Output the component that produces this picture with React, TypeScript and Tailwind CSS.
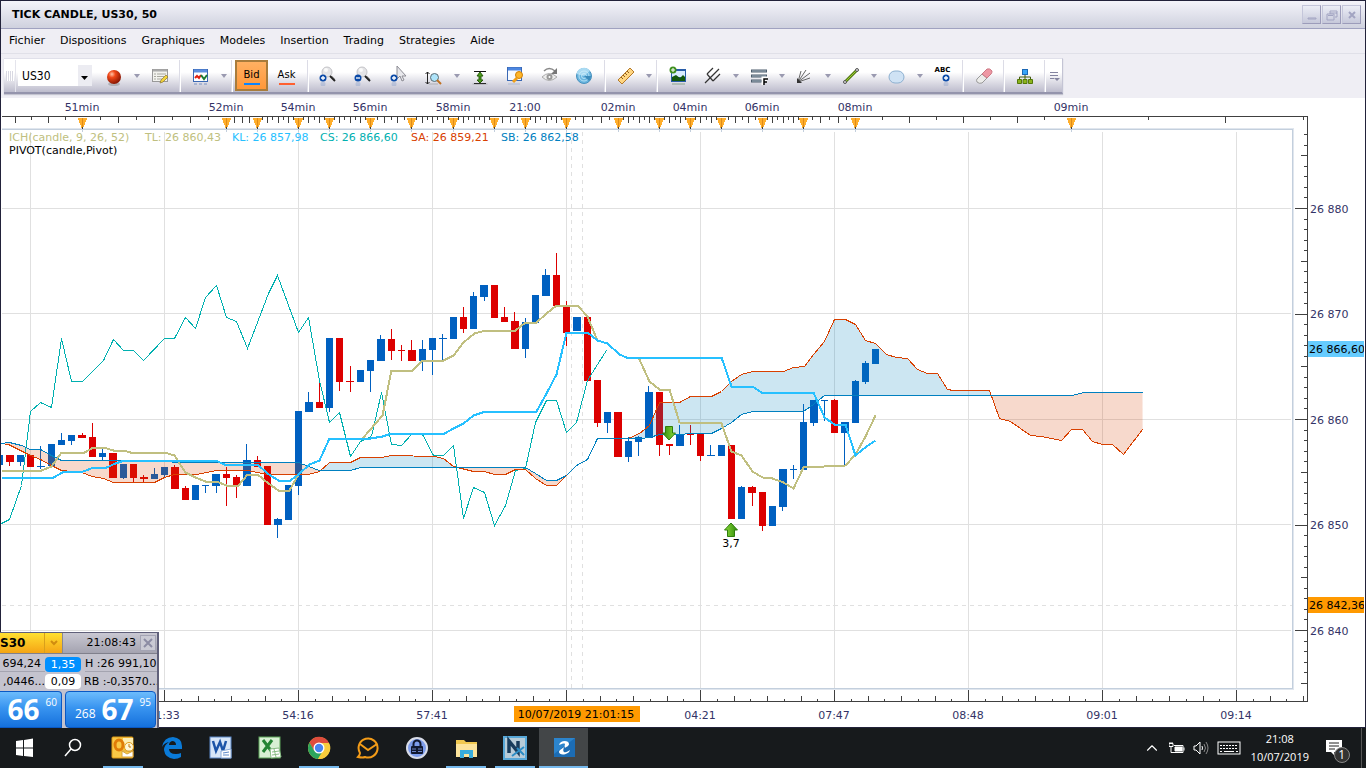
import type { ReactNode } from 'react';
import { ChevronUp } from 'lucide-react';

type Point = [number, number];
/** side, high, body top, body bottom, low */
type Candle = ['up' | 'down', number, number, number, number];

const UP = '#0060c0';
const DOWN = '#dc0000';
const CANDLE_STEP = 134 / 13;

const candles: Candle[] = [
    ['up', 455, 455, 465, 465],
    ['down', 455, 455, 462, 466],
    ['up', 455, 455, 462, 466],
    ['down', 455, 455, 467, 467],
    ['up', 446, 466, 467, 469],
    ['up', 444, 444, 466, 466],
    ['up', 433, 440, 445, 445],
    ['up', 435, 435, 441, 445],
    ['down', 433, 435, 438, 438],
    ['down', 423, 437, 457, 457],
    ['up', 449, 453, 457, 460],
    ['down', 453, 453, 478, 478],
    ['up', 464, 464, 478, 479],
    ['down', 464, 464, 478, 482],
    ['down', 475, 477, 479, 482],
    ['up', 468, 474, 479, 479],
    ['up', 467, 467, 475, 478],
    ['down', 465, 467, 489, 489],
    ['down', 486, 488, 500, 500],
    ['up', 485, 485, 500, 500],
    ['up', 485, 485, 486, 493],
    ['up', 474, 474, 486, 493],
    ['down', 467, 474, 478, 506],
    ['down', 475, 477, 486, 498],
    ['up', 444, 460, 486, 486],
    ['down', 456, 460, 467, 467],
    ['down', 466, 466, 525, 525],
    ['up', 518, 519, 525, 538],
    ['up', 485, 485, 520, 520],
    ['up', 411, 411, 486, 495],
    ['up', 392, 402, 412, 412],
    ['down', 383, 402, 408, 408],
    ['up', 338, 338, 408, 412],
    ['down', 338, 338, 382, 391],
    ['down', 366, 381, 382, 392],
    ['up', 370, 370, 382, 382],
    ['up', 360, 360, 371, 392],
    ['up', 335, 339, 361, 361],
    ['down', 329, 339, 351, 360],
    ['down', 345, 350, 351, 361],
    ['down', 340, 350, 361, 361],
    ['up', 340, 349, 361, 371],
    ['up', 338, 338, 350, 375],
    ['up', 334, 338, 339, 360],
    ['up', 317, 317, 339, 339],
    ['down', 307, 317, 329, 333],
    ['up', 292, 296, 329, 329],
    ['up', 285, 285, 297, 301],
    ['down', 285, 285, 318, 318],
    ['down', 307, 317, 322, 322],
    ['down', 312, 321, 349, 349],
    ['up', 318, 322, 349, 358],
    ['up', 295, 295, 323, 323],
    ['up', 269, 275, 296, 296],
    ['down', 253, 275, 306, 306],
    ['down', 301, 305, 333, 346],
    ['up', 317, 317, 331, 331],
    ['down', 317, 317, 381, 381],
    ['down', 380, 380, 423, 427],
    ['up', 412, 412, 423, 433],
    ['down', 412, 412, 457, 457],
    ['up', 437, 441, 457, 462],
    ['up', 436, 437, 442, 456],
    ['up', 386, 392, 438, 438],
    ['down', 392, 392, 445, 456],
    ['down', 444, 444, 446, 455],
    ['up', 425, 434, 446, 446],
    ['down', 425, 434, 435, 445],
    ['down', 434, 434, 456, 461],
    ['up', 445, 455, 456, 456],
    ['up', 445, 445, 456, 456],
    ['down', 445, 445, 519, 519],
    ['up', 486, 487, 519, 519],
    ['down', 486, 487, 493, 506],
    ['down', 492, 492, 526, 531],
    ['up', 506, 506, 526, 526],
    ['up', 469, 469, 507, 511],
    ['up', 465, 469, 470, 479],
    ['up', 404, 422, 470, 470],
    ['up', 400, 400, 423, 426],
    ['up', 400, 400, 401, 421],
    ['down', 399, 400, 433, 433],
    ['up', 422, 422, 433, 465],
    ['up', 380, 381, 423, 423],
    ['up', 361, 363, 382, 384],
    ['up', 349, 349, 364, 364],
];

// Ichimoku lines
const tenkan: Point[] = [
    [1, 470], [41, 470], [51, 466], [61, 452], [84, 452], [93, 447], [103, 447], [113, 450], [123, 450], [130, 452],
    [164, 452], [174, 455], [185, 472], [195, 477], [205, 481], [216, 481], [226, 485], [238, 485], [247, 474], [257, 474],
    [268, 483], [278, 490], [289, 490], [298, 474], [309, 464], [319, 460], [329, 438], [362, 438], [382, 415], [391, 370],
    [412, 370], [422, 360], [443, 360], [453, 355], [463, 342], [474, 333], [485, 330], [515, 330], [525, 322], [536, 322],
    [546, 313], [556, 305], [577, 305], [587, 316], [597, 340], [607, 343], [619, 354], [626, 357], [638, 357], [649, 381],
    [659, 389], [669, 389], [679, 422], [721, 423], [731, 451], [741, 455], [752, 471], [762, 477], [772, 478], [783, 482],
    [793, 488], [803, 467], [845, 465], [855, 454], [865, 436], [875, 415],
];

const kijun: Point[] = [
    [1, 477], [53, 477], [62, 472], [83, 471], [93, 467], [106, 467], [115, 463], [124, 460], [215, 460], [224, 464],
    [257, 464], [267, 473], [278, 480], [290, 480], [298, 474], [309, 464], [319, 460], [329, 438], [370, 438], [382, 436],
    [391, 433], [444, 433], [453, 428], [463, 423], [473, 415], [485, 411], [536, 411], [546, 393], [556, 374], [566, 332],
    [587, 332], [597, 340], [607, 343], [619, 354], [626, 357], [721, 357], [731, 386], [752, 386], [761, 392], [813, 392],
    [824, 417], [834, 424], [845, 424], [855, 455], [866, 446], [875, 440],
];

const chikou: Point[] = [
    [1, 523], [9, 519], [21, 485], [30, 411], [40, 402], [51, 407], [61, 338], [71, 381], [82, 381], [103, 360],
    [113, 339], [123, 350], [133, 350], [143, 360], [164, 338], [174, 338], [185, 317], [195, 328], [205, 297], [216, 285],
    [226, 317], [236, 321], [247, 348], [268, 293], [277, 275], [298, 332], [308, 317], [319, 380], [329, 422], [339, 412],
    [350, 456], [360, 441], [371, 436], [381, 392], [391, 444], [401, 445], [411, 434], [422, 434], [433, 455], [443, 455],
    [453, 445], [463, 518], [473, 487], [484, 492], [494, 525], [505, 505], [515, 470], [525, 468], [535, 422], [546, 400],
    [556, 400], [566, 432], [576, 422], [587, 380], [597, 364], [606, 350],
];

const senkouA: Point[] = [
    [1, 443], [8, 444], [30, 455], [40, 459], [51, 465], [61, 470], [81, 472], [92, 476], [103, 478], [113, 482],
    [154, 482], [164, 477], [174, 474], [196, 474], [216, 470], [247, 470], [267, 474], [308, 474], [319, 471], [329, 462],
    [350, 462], [360, 457], [381, 457], [391, 455], [434, 456], [443, 458], [453, 466], [473, 471], [484, 471], [494, 474],
    [505, 474], [515, 469], [525, 469], [535, 478], [546, 485], [556, 485], [566, 475], [576, 465], [587, 459], [597, 438],
    [628, 438], [639, 433], [649, 425], [659, 402], [679, 402], [690, 396], [711, 396], [721, 391], [731, 381], [741, 374],
    [752, 371], [783, 371], [793, 367], [804, 366], [813, 354], [824, 341], [834, 319], [845, 319], [855, 324], [865, 340],
    [875, 343], [886, 354], [896, 357], [907, 358], [917, 369], [927, 373], [937, 373], [947, 389], [953, 390], [989, 390],
    [999, 418], [1010, 421], [1030, 435], [1041, 436], [1061, 440], [1071, 429], [1082, 429], [1092, 441], [1102, 444],
    [1112, 444], [1123, 454], [1142, 429],
];

const senkouB: Point[] = [
    [1, 443], [9, 442], [21, 445], [30, 449], [40, 449], [51, 455], [61, 460], [164, 460], [174, 462], [298, 462],
    [308, 466], [319, 470], [350, 470], [360, 467], [525, 467], [535, 473], [546, 480], [556, 480], [566, 475], [576, 465],
    [587, 459], [597, 438], [640, 438], [649, 437], [659, 434], [711, 433], [721, 428], [731, 422], [741, 414], [752, 411],
    [803, 411], [813, 404], [824, 395], [1072, 395], [1083, 392], [1142, 392],
];

const toPoints = (points: Point[]) => points.map((p) => p.join(',')).join(' ');
const cloud = toPoints([...senkouA, ...[...senkouB].reverse()]);

const timeMarkers = [82, 226, 257, 298, 329, 370, 411, 453, 494, 525, 566, 618, 659, 690, 721, 762, 803, 855, 1071];
const timeDivisions = [8, 4, 8, 6, 8, 6, 8, 8, 4, 8, 6, 8, 6, 6, 6, 8, 6, 8];
const gridX = [30, 164, 298, 432, 566, 700, 834, 968, 1102, 1236];
const gridY = [208, 313, 419, 524, 630];

const topLabels: [number, string][] = [
    [82, '51min'], [226, '52min'], [298, '54min'], [370, '56min'], [453, '58min'], [525, '21:00'],
    [618, '02min'], [690, '04min'], [762, '06min'], [855, '08min'], [1071, '09min'],
];
const bottomLabels: [number, string][] = [
    [164, '51:33'], [298, '54:16'], [432, '57:41'], [700, '04:21'], [834, '07:47'], [968, '08:48'], [1102, '09:01'], [1236, '09:14'],
];
const priceLabels: [number, string][] = [
    [213, '26 880'], [318, '26 870'], [424, '26 860'], [529, '26 850'], [635, '26 840'],
];
const legend: [number, string, string][] = [
    [9, '#c0bf80', 'ICH(candle, 9, 26, 52)'],
    [145, '#c0bf80', 'TL: 26 860,43'],
    [232, '#26c0ff', 'KL: 26 857,98'],
    [320, '#00b0b0', 'CS: 26 866,60'],
    [411, '#d84000', 'SA: 26 859,21'],
    [501, '#0080c0', 'SB: 26 862,58'],
];

// Top ruler: alternating short and long ticks between two markers
function topTicks() {
    let d = 'M15 116v6M31 116v3M48 116v6M65 116v3M1148 116v3M1225 116v6M1303 116v3';
    timeDivisions.forEach((count, i) => {
        const from = timeMarkers[i];
        const step = (timeMarkers[i + 1] - from) / count;
        for (let n = 1; n < count; n++) {
            const long = count === 4 || n % 2 === 0;
            d += `M${Math.round(from + n * step)} 116v${long ? 6 : 3}`;
        }
    });
    return d;
}

function bottomTicks() {
    let d = '';
    for (let n = 1; n <= 68; n++) {
        const x = Math.round(164 + n * 16.75);
        if (x > 1304) break;
        const size = n % 8 === 0 ? 12 : n % 2 === 0 ? 6 : 3;
        d += `M${x} 701v-${size}`;
    }
    return d + 'M164 701v-12M30 701v-12';
}

function rightTicks() {
    let d = '';
    for (let n = -7; n <= 45; n++) {
        const y = Math.round(208 + n * 10.55);
        const size = n % 10 === 0 ? 13 : n % 5 === 0 ? 7 : 4;
        d += `M1307 ${y}h-${size}`;
    }
    return d;
}

function SignalArrow({ x, y, down = false }: { x: number; y: number; down?: boolean }) {
    return (
        <g transform={`translate(${x} ${y})${down ? ' rotate(180)' : ''}`}>
            <path d="M0-7 6.500 0H3.500V6.500H-3.500V0H-6.500Z" fill="url(#arrow)" stroke="#2f7d0c" />
        </g>
    );
}

function Chart() {
    return (
        <svg viewBox="1 98 1364 629" className="block h-auto w-full bg-white" fontFamily='"DejaVu Sans", sans-serif' fontSize="11">
            <defs>
                <linearGradient id="arrow" x1="0" x2="1">
                    <stop offset="0" stopColor="#8fdc3a" />
                    <stop offset="1" stopColor="#2c8a0a" />
                </linearGradient>
                <clipPath id="aboveB">
                    <polygon points={`1,98 ${toPoints(senkouB)} 1143,98`} />
                </clipPath>
                <clipPath id="belowB">
                    <polygon points={`1,700 ${toPoints(senkouB)} 1143,700`} />
                </clipPath>
                <clipPath id="priceAxis">
                    <rect x="1308" y="98" width="56" height="629" />
                </clipPath>
            </defs>

            <g transform="translate(0.500 0.500)" fill="none" shapeRendering="crispEdges">
                {/* Grid */}
                <path d={gridX.map((x) => `M${x} 131V687`).join('')} stroke="#e0e0e0" />
                <path d={gridY.map((y) => `M1 ${y}H1290`).join('')} stroke="#e0e0e0" />
                <path d="M571 131V687M582 131V687M1 605H1292" stroke="#e0e0e0" strokeDasharray="4 4" />

                {/* Plot border */}
                <path d="M1 128H1293V689H1" stroke="#e0e6ee" />
                <path d="M1 129H1292V688H1" stroke="#c3cfdd" />

                {/* Rulers */}
                <path d={`M1 116H1307V701H158${topTicks()}${bottomTicks()}${rightTicks()}`} stroke="#404040" />
                {timeMarkers.map((x) => (
                    <g key={x}>
                        <path d={`M${x - 5} 117h10l-4 10h-2z`} fill="#ffae2b" />
                        <path d={`M${x} 117v9`} stroke="#e08c18" />
                        <path d={`M${x} 126v2`} stroke="#404040" />
                        <path d={`M${x} 129v2`} stroke="#c3cfdd" />
                    </g>
                ))}

                {/* Candles */}
                {candles.map(([side, high, top, bottom, low], i) => {
                    const x = 30 + (i - 3) * CANDLE_STEP;
                    const left = Math.round(x - 3.1);
                    const right = Math.round(x + 4.2);
                    const color = side === 'up' ? UP : DOWN;
                    return (
                        <g key={i} transform="translate(-0.500 -0.500)">
                            <rect x={Math.round(x)} y={high} width="1" height={low - high} fill={color} />
                            <rect x={left} y={top} width={right - left} height={bottom - top} fill={color} />
                        </g>
                    );
                })}

                {/* Kumo */}
                <polygon points={cloud} fill="#0080c0" fillOpacity="0.200" clipPath="url(#aboveB)" />
                <polygon points={cloud} fill="#d84000" fillOpacity="0.200" clipPath="url(#belowB)" />
                <polyline points={toPoints(chikou)} stroke="#00b0b0" />
                <polyline points={toPoints(senkouA)} stroke="#d84000" />
                <polyline points={toPoints(senkouB)} stroke="#0080c0" />
                <polyline points={toPoints(tenkan)} stroke="#c0bf80" strokeWidth="2" />
                <polyline points={toPoints(kijun)} stroke="#26c0ff" strokeWidth="2" />
            </g>

            <SignalArrow x={669} y={433} down />
            <SignalArrow x={731} y={530} />
            <text x="731" y="547" textAnchor="middle">3,7</text>

            {/* Labels */}
            <g fill="#333366" textAnchor="middle">
                {topLabels.map(([x, label]) => <text key={x} x={x} y="111">{label}</text>)}
                {bottomLabels.map(([x, label]) => <text key={x} x={x} y="719">{label}</text>)}
            </g>
            {legend.map(([x, color, label]) => <text key={x} x={x} y="141" fill={color}>{label}</text>)}
            <text x="9" y="154">PIVOT(candle,Pivot)</text>
            <g clipPath="url(#priceAxis)">
                {priceLabels.map(([y, label]) => <text key={y} x="1310" y={y} fill="#333366">{label}</text>)}
                <rect x="1308" y="341" width="56" height="16" fill="#66ccff" />
                <text x="1309" y="353">26 866,60</text>
                <rect x="1308" y="597" width="56" height="16" fill="#ff9900" />
                <text x="1309" y="609">26 842,36</text>
            </g>
            <rect x="514" y="706" width="126" height="16" fill="#ff9900" />
            <text x="576" y="718" textAnchor="middle">10/07/2019 21:01:15</text>
        </svg>
    );
}

/* ---------- Toolbar ---------- */

function Tool({ label, children }: { label: string; children: ReactNode }) {
    return (
        <button type="button" aria-label={label} className="flex h-8 w-[35px] items-center justify-center">
            <svg viewBox="0 0 20 20" className="size-5" fill="none">{children}</svg>
        </button>
    );
}

function Drop({ label }: { label: string }) {
    return (
        <button type="button" aria-label={label} className="flex h-8 w-[11px] items-center justify-center">
            <svg viewBox="0 0 6 4" className="h-1 w-1.5"><path d="M0 0h6L3 4z" fill="#9a9ab0" /></svg>
        </button>
    );
}

function Sep() {
    return <span className="mx-0.5 h-8 w-0.5 border-r border-white bg-[#dcdce6]" />;
}

function Lens() {
    return (
        <>
            <circle cx="8" cy="6" r="5" fill="#e4e4e6" stroke="#c4c4c8" />
            <circle cx="7" cy="4" r="2" fill="#fafafa" />
            <path d="m11 10 5 5" stroke="#222" strokeWidth="2" />
            <path d="m13 10 3 3" stroke="#aaa" />
        </>
    );
}

function Badge({ x = 4, y = 12, minus = false }: { x?: number; y?: number; minus?: boolean }) {
    return (
        <g transform={`translate(${x} ${y})`}>
            <circle r="3.500" fill="#0b4aa8" />
            <path d={minus ? 'M-2 0h4' : 'M-2 0h4M0-2v4'} stroke="#fff" strokeWidth="1.300" />
            <circle cy="6" r="2.500" fill="#0b4aa8" opacity="0.150" />
        </g>
    );
}

function Toolbar() {
    return (
        <div className="h-11 pt-1 pl-[3px]">
            <div className="flex h-9 w-fit items-center border-t border-r border-b-2 border-t-[#e0e0ea] border-r-[#c4c4d4] border-b-[#9494ac] bg-linear-to-b from-white from-40% to-[#bdbccd] shadow-[0_1px_1px_#c4c4d0]">
                <span className="ml-0.5 h-2.5 w-2 bg-[repeating-linear-gradient(90deg,#d8d8e2_0_1px,#fff_1px_2px)]" />
                <span className="mr-0.5 ml-px h-8 w-px bg-[#e4e4ec]" />
                <label className="relative flex h-[21px] w-[74px] bg-white">
                    <select
                        aria-label="Instrument"
                        className="w-full appearance-none bg-transparent pl-1 font-['DejaVu_Sans_Condensed','DejaVu_Sans',sans-serif] text-[12px] outline-none"
                    >
                        <option>US30</option>
                    </select>
                    <span className="pointer-events-none absolute inset-y-0 right-0 flex w-3.5 items-center justify-center bg-[#ececf2]">
                        <svg viewBox="0 0 8 4" className="mt-1 h-1 w-2"><path d="M0 0h7L3.500 4z" /></svg>
                    </span>
                </label>
                <span className="w-1" />

                <Tool label="Ordre">
                    <defs>
                        <radialGradient id="ball" cx="0.350" cy="0.300" r="0.700">
                            <stop offset="0" stopColor="#ffc4a8" />
                            <stop offset="0.350" stopColor="#f04818" />
                            <stop offset="1" stopColor="#8c1804" />
                        </radialGradient>
                    </defs>
                    <ellipse cx="10" cy="18" rx="6" ry="2" fill="#777" opacity="0.400" />
                    <circle cx="10" cy="11" r="7" fill="url(#ball)" />
                </Tool>
                <Drop label="Options ordre" />
                <Tool label="Editer">
                    <rect x="2.500" y="3.500" width="15" height="12" fill="#f2f2ee" stroke="#999" />
                    <path d="M3 4.500h14" stroke="#aaa" strokeWidth="2" />
                    <path d="M4 8h2m1 0h9M4 10.500h2m1 0h7M4 13h2m1 0h5" stroke="#a8a8a0" />
                    <path d="m10 17 1-3 5-5 2 2-5 5z" fill="#f2d33c" stroke="#8a7430" strokeWidth="0.700" />
                </Tool>
                <Sep />
                <Tool label="Graphique">
                    <rect x="2.500" y="3.500" width="14" height="12" fill="#fff" stroke="#3a68b4" />
                    <path d="M3 5h13" stroke="#5c8ee0" strokeWidth="3" />
                    <path d="m4 12 2-2 2 2 2-3" stroke="#e02010" strokeWidth="2" />
                    <path d="m10 9 3 4 3-4" stroke="#1c7a34" strokeWidth="2" />
                    <path d="M3 18h3m2 0h3m2 0h3" stroke="#3a68b4" opacity="0.300" strokeWidth="2" />
                </Tool>
                <Drop label="Types de graphique" />
                <Sep />
                <button type="button" className="flex h-[31px] w-[33px] flex-col items-center gap-0.5 border-2 border-[#a87c3c] bg-linear-to-b from-[#ffb062] to-[#ff9838] pt-[7px] text-[10px] leading-3">
                    Bid
                    <span className="h-0.5 w-4 bg-[#0a84ff]" />
                </button>
                <button type="button" className="flex h-[31px] w-[37px] flex-col items-center gap-0.5 pt-[9px] text-[10px] leading-3">
                    Ask
                    <span className="h-0.5 w-4 bg-[#ff6030]" />
                </button>
                <Sep />
                <Tool label="Zoom avant"><Lens /><Badge /></Tool>
                <Tool label="Zoom arriere"><Lens /><Badge minus /></Tool>
                <Tool label="Curseur">
                    <path d="M8 0v13l3-3 2 5 2-1-2-4h4z" fill="#e8e8ec" stroke="#8c8c94" />
                    <Badge x={5} />
                </Tool>
                <Tool label="Zoom axe">
                    <path d="M3.500 6v12M1.500 8l2-2 2 2M1.500 16l2 2 2-2" stroke="#222" />
                    <circle cx="10.500" cy="11.500" r="4" fill="#aee4fa" stroke="#5a6c74" />
                    <path d="m13 14 4 4" stroke="#c07020" strokeWidth="2" />
                    <path d="M5 18h9" stroke="#888" opacity="0.500" />
                </Tool>
                <Drop label="Options zoom" />
                <Tool label="Ajuster">
                    <path d="M4 5.500h12M4 17.500h12" stroke="#111" />
                    <path d="M10 6l3 4h-2v4h2l-3 3-3-3h2v-4H7z" fill="#4b9c1c" stroke="#265c08" />
                    <ellipse cx="10" cy="18" rx="8" ry="1" fill="#777" opacity="0.300" />
                </Tool>
                <Tool label="Proprietes">
                    <rect x="2.500" y="1.500" width="14" height="13" fill="#f7faff" stroke="#3a68b4" />
                    <path d="M3 3h13" stroke="#4c86e0" strokeWidth="3" />
                    <circle cx="14" cy="9" r="3.500" fill="#ffb628" stroke="#d08008" />
                    <path d="m12 12-4 4" stroke="#f0a018" strokeWidth="3" />
                    <path d="M3 18h12" stroke="#3a68b4" opacity="0.250" />
                </Tool>
                <Tool label="Afficher">
                    <path d="M2 11q7-7 15 0-8 7-15 0z" fill="#ececec" stroke="#aaa" />
                    <circle cx="9.500" cy="11" r="3" fill="#999" />
                    <circle cx="9.500" cy="11" r="1" fill="#fff" />
                    <path d="M4 5q5-5 11 0" stroke="#888" strokeWidth="1.500" />
                    <path d="M17 2v6h-6z" fill="#777" />
                </Tool>
                <Tool label="Radar">
                    <circle cx="9" cy="10" r="7.500" fill="#69b5df" stroke="#4790bd" />
                    <path d="M9 10 1.500 8A7.500 7.500 0 0 1 15 5z" fill="#a9daf2" />
                    <circle cx="9" cy="10" r="5" stroke="#d4f0fc" strokeWidth="0.700" />
                    <circle cx="9" cy="10" r="2.500" stroke="#d4f0fc" strokeWidth="0.700" />
                    <path d="M9 10h7a7 7 0 0 1-2 5z" fill="#3c8cbc" />
                </Tool>
                <Sep />
                <Tool label="Mesurer">
                    <path d="M2 14 14 2l4 4L6 18z" fill="#ffd681" stroke="#b57928" />
                    <path d="m5 11 2 2m0-4 2 2m0-4 2 2m0-4 2 2" stroke="#8c5c1c" />
                </Tool>
                <Drop label="Options mesure" />
                <Sep />
                <Tool label="Ajouter image">
                    <rect x="3" y="3" width="15" height="13" fill="#285ca8" />
                    <rect x="4" y="5" width="13" height="6" fill="#d8ecff" />
                    <path d="M4 15v-4l4-2 4 3 3-3 2 2v4z" fill="#12580c" />
                    <circle cx="5" cy="4" r="3.500" fill="#3f901f" />
                    <path d="M3 4h4M5 2v4" stroke="#fff" />
                    <path d="M4 18h13" stroke="#12580c" strokeWidth="2" opacity="0.200" />
                </Tool>
                <Tool label="Fourchette">
                    <path d="M2 17 8 11M4 8l6-6M8 11l8-8M10 15l7-7M4 8l6 7" stroke="#333" strokeWidth="1.200" />
                </Tool>
                <Drop label="Options fourchette" />
                <Tool label="Fibonacci">
                    <path d="M2 5h16M2 10h16M2 15h11" stroke="#4c5c6c" strokeWidth="3" />
                    <path d="M3 5h14M3 10h14M3 15h9" stroke="#a8b8c4" />
                    <path d="M14 19v-7h5M14 15h4" stroke="#fff" strokeWidth="3" />
                    <path d="M15 19v-6h4M15 16h3" stroke="#000" strokeWidth="1.500" />
                </Tool>
                <Drop label="Options Fibonacci" />
                <Tool label="Eventail">
                    <path d="M3 16 6 5M3 16l8-12M3 16 15 7M3 16l12-4" stroke="#666" />
                    <path d="M2 12v5h5z" fill="#333" />
                </Tool>
                <Drop label="Options eventail" />
                <Tool label="Ligne">
                    <path d="M4 16 16 4" stroke="#547c14" strokeWidth="3" />
                    <path d="M4 16 16 4" stroke="#9ccc2c" />
                    <circle cx="4" cy="16" r="1.500" fill="#ddd" stroke="#555" />
                    <circle cx="16" cy="4" r="1.500" fill="#ddd" stroke="#555" />
                </Tool>
                <Drop label="Options ligne" />
                <Tool label="Ellipse">
                    <rect x="2" y="5" width="15" height="12" rx="6" fill="#cfe2f4" stroke="#8db0d0" />
                </Tool>
                <Drop label="Options ellipse" />
                <button type="button" aria-label="Texte" className="flex h-8 w-[35px] flex-col items-center pt-1.5 text-[7px] leading-[8px] font-bold">
                    ABC
                    <svg viewBox="0 0 10 12" className="ml-1.5 h-3 w-2.5"><Badge x={5} y={4} /></svg>
                </button>
                <Sep />
                <Tool label="Effacer">
                    <path d="m3 13 5-5 5 4-5 5q-3 1-5-1-1-2 0-3z" fill="#ececea" stroke="#999" />
                    <path d="m8 8 5-5q3-1 5 2 0 2-1 3l-4 4z" fill="#ee98a4" stroke="#cc7884" />
                </Tool>
                <Sep />
                <Tool label="Hierarchie">
                    <path d="M10 8v3M4.500 14v-3h11v3M10 11v3" stroke="#445c10" />
                    <rect x="7.500" y="3.500" width="5" height="5" fill="#38a4f8" stroke="#1c68b4" />
                    <path d="M2.500 13.500h4v4h-4zM8 13.500h4v4H8zM13.500 13.500h4v4h-4z" fill="#8cb41c" stroke="#547808" />
                </Tool>
                <Sep />
                <button type="button" aria-label="Plus" className="flex h-8 w-3.5 items-center justify-center">
                    <svg viewBox="0 0 10 10" className="size-2.5" fill="none" stroke="#8484a0">
                        <path d="M0 1.500h8M0 4.500h8M0 7.500h4" />
                        <path d="M4 7h6L7 10z" fill="#8484a0" stroke="none" />
                    </svg>
                </button>
            </div>
        </div>
    );
}

/* ---------- Window chrome ---------- */

const menus = ['Fichier', 'Dispositions', 'Graphiques', 'Modeles', 'Insertion', 'Trading', 'Strategies', 'Aide'];

const windowButtons = [
    { label: 'Reduire', path: 'M3 10h8v1H3z' },
    { label: 'Restaurer', path: 'M5 3h7v2H5zM11 5h1v4h-2M5 5v1M2 6h7v6H2zM3 7.500h5' },
    { label: 'Fermer', path: 'm4 4 6 6m0-6-6 6' },
];

function TitleBar() {
    return (
        <div className="flex h-7 items-center justify-between border-b border-[#a0a2c0] bg-linear-to-b from-[#f4f4fa] to-[#cfd1de] pr-1 pl-[11px]">
            <h1 className="pt-0.5 text-[11px] font-bold">TICK CANDLE, US30, 50</h1>
            <div className="flex gap-px">
                {windowButtons.map((b) => (
                    <button
                        key={b.label}
                        type="button"
                        aria-label={b.label}
                        className="flex size-[19px] items-center justify-center border border-[#c4c6da] border-r-[#9c9cba] border-b-[#9c9cba] bg-linear-to-b from-[#eceef6] to-[#c6c8da]"
                    >
                        <svg viewBox="0 0 14 14" className="size-3.5" fill="none" stroke="#a2a4c2" strokeWidth={b.label === 'Fermer' ? 2 : 1}>
                            <path d={b.path} />
                        </svg>
                    </button>
                ))}
            </div>
        </div>
    );
}

function QuotePanel() {
    return (
        <div className="absolute -bottom-px -left-px flex h-24 w-[159px] flex-col overflow-hidden border-t border-r-2 border-[#60607a] bg-[#c4c3ce] text-[11px]">
            <div className="flex h-[21px] border-b border-[#80808c]">
                <div className="flex w-11 items-center bg-linear-to-b from-[#ffe030] to-[#f4a414] text-[12px] font-bold">S30</div>
                <button type="button" aria-label="Instruments" className="flex w-[18px] items-center justify-center border-l border-[#d8a01c] bg-linear-to-b from-[#ffe030] to-[#f4a414]">
                    <svg viewBox="0 0 8 6" className="h-1.5 w-2" fill="none" stroke="#d08c10" strokeWidth="2"><path d="m1 1 3 3 3-3" /></svg>
                </button>
                <div className="flex flex-1 items-center justify-end gap-1 border-l border-[#888894] bg-linear-to-b from-[#c9c8d2] to-[#a4a3b0] pr-px">
                    <span>21:08:43</span>
                    <button type="button" aria-label="Fermer panneau" className="flex size-4 items-center justify-center border border-[#a4a4b4] bg-[#cacad4]">
                        <svg viewBox="0 0 10 10" className="size-2.5" stroke="#8c8ca4" strokeWidth="2"><path d="m1 1 8 8m0-8-8 8" /></svg>
                    </button>
                </div>
            </div>
            <div className="grid grid-cols-[45px_36px_76px] items-center gap-y-0.5 py-0.5 leading-[15px]">
                <span className="flex justify-end border-b border-[#a4a4b0] pr-1 whitespace-nowrap">694,24</span>
                <span className="rounded-sm bg-[#0090ff] text-center text-white">1,35</span>
                <span className="ml-1 border-b border-[#a4a4b0] whitespace-nowrap">H :26 991,10</span>
                <span className="flex justify-end whitespace-nowrap">,0446...</span>
                <span className="rounded-sm bg-white text-center">0,09</span>
                <span className="ml-[3px] whitespace-nowrap">RB :-0,3570...</span>
            </div>
            <div className="flex flex-1 gap-[3px] font-['Open_Sans',sans-serif] text-white">
                <button type="button" className="flex w-[62px] items-start justify-end rounded-tr-sm border border-l-0 border-[#0a58c4] bg-linear-to-b from-[#6cbcfc] via-[#3894f0] via-45% to-[#1470dc] pr-1">
                    <span className="text-[28px] leading-[34px] font-bold">66</span>
                    <span className="pt-1 pl-1.5 text-[10px] leading-[13px]">60</span>
                </button>
                <button type="button" className="flex w-[91px] items-start justify-end rounded-sm border border-[#0a58c4] bg-linear-to-b from-[#6cbcfc] via-[#3894f0] via-45% to-[#1470dc] pr-1">
                    <span className="pt-3.5 pr-1.5 text-[12px] leading-4">268</span>
                    <span className="text-[28px] leading-[34px] font-bold">67</span>
                    <span className="pt-1 pl-1.5 text-[10px] leading-[13px]">95</span>
                </button>
            </div>
        </div>
    );
}

/* ---------- Taskbar ---------- */

interface TaskItemProps {
    label: string;
    running?: boolean;
    active?: boolean;
    children: ReactNode;
}

function TaskItem({ label, running = false, active = false, children }: TaskItemProps) {
    return (
        <button
            type="button"
            aria-label={label}
            className={`flex w-[49px] flex-col items-center justify-between pt-2 ${active ? 'bg-[#434648]' : ''}`}
        >
            <svg viewBox="0 0 24 24" className="size-6" fill="none">{children}</svg>
            <span className={`h-0.5 ${active ? 'w-full' : 'w-10'} ${running || active ? 'bg-[#76b9ed]' : ''}`} />
        </button>
    );
}

function Taskbar() {
    return (
        <footer className="flex h-10 justify-between bg-[#171a1c] font-['Open_Sans',sans-serif] text-white">
            <div className="flex">
                <TaskItem label="Demarrer">
                    <path d="m3 5 7-1v7.500H3zm8-1 9-1.500v9h-9zM3 12.500h7V20l-7-1zm8 0h9V21l-9-1z" fill="#fff" />
                </TaskItem>
                <TaskItem label="Rechercher">
                    <circle cx="13" cy="9" r="5.500" stroke="#fff" strokeWidth="1.500" />
                    <path d="m9 13-6 7" stroke="#fff" strokeWidth="1.500" />
                </TaskItem>
                <TaskItem label="Outlook" running>
                    <rect x="1" y="1" width="21" height="21" rx="1" fill="#f9c846" stroke="#e09a14" />
                    <path d="M12 2h10v10H12z" fill="#fdeeb4" />
                    <ellipse cx="8" cy="9" rx="4" ry="5" stroke="#e07c08" strokeWidth="3" />
                    <circle cx="18" cy="11" r="4.500" fill="#fff6d8" stroke="#e09a14" />
                    <path d="M18 8v3h2" stroke="#c07810" />
                    <path d="M11 15h11v6H11zm0 0 5 3 6-3" fill="#fff" stroke="#d8a43c" />
                </TaskItem>
                <TaskItem label="Edge">
                    <path d="M2 11Q4 1 13 1q9 1 9 9v3H9q0 5 7 5 3 0 5-1v4q-3 2-7 2-9-1-10-9 0-5 5-8-5 1-7 5zm7-2h7q0-4-4-4-3 1-3 4z" fill="#0a7ad8" />
                </TaskItem>
                <TaskItem label="Word">
                    <rect x="1" y="1" width="21" height="21" fill="#d8e6f8" stroke="#5c88c8" />
                    <path d="m4 5 3 10 4-9 3 9 3-10" stroke="#1c54a8" strokeWidth="2.500" />
                    <path d="m12 15 10-2v9H12z" fill="#fff" stroke="#8cacd8" />
                    <path d="m14 17 6-1m-6 3h6" stroke="#5c88c8" />
                </TaskItem>
                <TaskItem label="Excel">
                    <rect x="1" y="1" width="21" height="21" fill="#d8f0d4" stroke="#5ca458" />
                    <path d="m5 4 9 12M14 4 5 16" stroke="#248434" strokeWidth="3" />
                    <path d="m12 13 9-1 2 9-10 1z" fill="#fff" stroke="#88bc84" />
                    <path d="m14 16 7-1m-7 4 7-1m-5-5 2 8" stroke="#88bc84" />
                </TaskItem>
                <TaskItem label="Chrome" running>
                    <circle cx="12" cy="12" r="11" fill="#f8cc3c" />
                    <path d="M12 12 22 7A11 11 0 0 0 2.500 6.500L7 15z" fill="#de4c3c" />
                    <path d="M2.500 6.500A11 11 0 0 0 11 23l5-8-9-.500z" fill="#2ca45c" />
                    <path d="M12 7h10a11 11 0 0 1-11 16l5-8z" fill="#f8cc3c" />
                    <circle cx="12" cy="12" r="5.500" fill="#fff" />
                    <circle cx="12" cy="12" r="4.200" fill="#4884f0" />
                </TaskItem>
                <TaskItem label="eM Client">
                    <path d="M2 21q2-2 2-4A9.500 9.500 0 1 1 9 21q-2 1-7 0z" stroke="#f49c18" strokeWidth="2" />
                    <path d="m4 8 8 6 9-6" stroke="#f49c18" strokeWidth="2" />
                </TaskItem>
                <TaskItem label="KeePass">
                    <circle cx="12" cy="12" r="10" fill="#7c9cec" stroke="#d8dce8" strokeWidth="2" />
                    <path d="M8.500 11V8a3.500 3.500 0 0 1 7 0v3" stroke="#101830" strokeWidth="2" />
                    <rect x="6" y="10" width="12" height="8" rx="1" fill="#101830" />
                    <path d="M7 13h4m2 0h4M7 15.500h4m2 0h4" stroke="#6c84c4" />
                </TaskItem>
                <TaskItem label="Explorateur" running>
                    <path d="M2 4h8l2 2h11v15H2z" fill="#f0c850" />
                    <path d="M2 8h21v13H2z" fill="#fce49c" />
                    <path d="M6 22v-8h13v8h-4v-4h-5v4z" fill="#38acdc" />
                </TaskItem>
                <TaskItem label="NanoTrader" running>
                    <rect x="1" y="1" width="22" height="22" fill="#b8ccd8" stroke="#58a8d8" strokeWidth="2" />
                    <path d="M6 17V5l9 11V5" stroke="#183c5c" strokeWidth="3.500" />
                    <path d="m9 20 12-9m-7 1 7 7" stroke="#2c8cc4" strokeWidth="2" />
                </TaskItem>
                <TaskItem label="TICK CANDLE, US30, 50" active>
                    <rect x="2" y="2" width="21" height="19" fill="#1c6cb4" />
                    <path d="M2 2h21L2 18z" fill="#2c84cc" />
                    <path d="M7 9c1-5 10-5 10-1 0 2-3 3-4 4-1-2 0-3 0-4-1-1-3 0-6 1z" fill="#fff" />
                    <path d="M18 14c-1 5-11 6-11 2 0-2 3-3 5-5-1 3-1 4 0 5 2 1 4-1 6-2z" fill="#fff" />
                </TaskItem>
            </div>

            <div className="flex items-center gap-2 pr-1">
                <ChevronUp size={18} strokeWidth={1.5} aria-label="Icones cachees" />
                <svg viewBox="0 0 16 12" className="h-3 w-4" fill="none" stroke="#fff">
                    <path d="M5 3.500h9v7H4M15 5.500v3M0 1.500h4v3H0zM1 0v2m2-2v2M2 5v5.500h2" />
                    <path d="M6 5h7v4H6z" fill="#fff" />
                </svg>
                <svg viewBox="0 0 16 14" className="h-3.5 w-4" fill="none" stroke="#fff">
                    <path d="M1 5h2l4-4v12L3 9H1z" />
                    <path d="M9 5q1 2 0 4" />
                    <path d="M11 3q3 4 0 8m2-10q4 6 0 12" stroke="#888" />
                </svg>
                <svg viewBox="0 0 24 14" className="h-3.5 w-6" fill="none" stroke="#fff">
                    <rect x="1" y="1" width="22" height="12" />
                    <path d="M3 4.500h18M3 7.500h18" strokeDasharray="2 1" />
                    <path d="M3 10.500h2m2 0h10m2 0h2" />
                </svg>
                <div className="ml-0.5 text-center text-[11px] leading-[18px]">
                    <div>21:08</div>
                    <div>10/07/2019</div>
                </div>
                <button type="button" aria-label="Notifications" className="relative ml-2 h-8 w-7">
                    <svg viewBox="0 0 28 32" className="h-8 w-7">
                        <path d="M1 8h16v12H9v3l-3-3H1z" fill="#fff" />
                        <path d="M4 11h10M4 14h10M4 17h6" stroke="#222" />
                        <circle cx="17" cy="23" r="7.500" fill="#333" stroke="#888" />
                    </svg>
                    <span className="absolute right-2 bottom-px text-[12px] leading-4">1</span>
                </button>
                <span className="h-10 w-px bg-[#555]" />
            </div>
        </footer>
    );
}

export default function App() {
    return (
        <div className="font-['DejaVu_Sans',sans-serif] text-black">
            <main className="relative border border-[#22223a] bg-[#efeef4]">
                <TitleBar />
                <nav className="flex h-[25px] items-center gap-[15px] border-b border-[#e0e0e8] pt-px pl-2 text-[11px]">
                    {menus.map((m) => <button key={m} type="button">{m}</button>)}
                </nav>
                <Toolbar />
                <Chart />
                <QuotePanel />
            </main>
            <Taskbar />
        </div>
    );
}
